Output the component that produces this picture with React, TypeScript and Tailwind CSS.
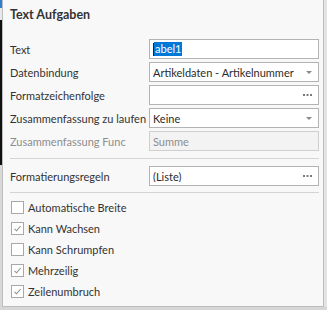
import React from "react";

const font = { fontFamily: 'Lato, "Liberation Sans", sans-serif' };

function Arrow() {
  return (
    <svg width="6" height="3" viewBox="0 0 6 3" className="shrink-0">
      <path d="M0 0H6L3 3Z" fill="#8a8a8a" />
    </svg>
  );
}

function Dots() {
  return (
    <svg width="9" height="2" viewBox="0 0 9 2" className="shrink-0">
      <rect x="0" y="0" width="2" height="2" fill="#7a7a7a" />
      <rect x="3.5" y="0" width="2" height="2" fill="#7a7a7a" />
      <rect x="7" y="0" width="2" height="2" fill="#7a7a7a" />
    </svg>
  );
}

function Row({ label, children, disabled }: { label: string; children: React.ReactNode; disabled?: boolean }) {
  return (
    <div className="flex items-center h-[20px]">
      <div className={"w-[139px] shrink-0 whitespace-nowrap text-[11px] leading-none " + (disabled ? "text-[#8d8d8d]" : "text-[#333333]")}>{label}</div>
      {children}
    </div>
  );
}

function Box({ children, disabled, right }: { children?: React.ReactNode; disabled?: boolean; right?: React.ReactNode }) {
  return (
    <div
      className={
        "w-[170px] h-[20px] flex items-center pl-[3px] pr-[6px] border text-[11px] leading-none " +
        (disabled ? "bg-[#f3f3f3] border-[#cfcfcf] text-[#8d8d8d]" : "bg-white border-[#b3b3b3] text-[#2b2b2b]")
      }
    >
      <div className="flex-1 flex items-center overflow-hidden whitespace-nowrap">{children}</div>
      {right}
    </div>
  );
}

function Check({ label, checked }: { label: string; checked?: boolean }) {
  return (
    <div className="flex items-center h-[13px]">
      <div className="w-[13px] h-[13px] border border-[#a8a8a8] bg-white flex items-center justify-center shrink-0">
        {checked && (
          <svg width="9" height="9" viewBox="0 0 9 9">
            <path d="M1.5 4.8L3.6 6.8L7.6 2" stroke="#8f8f8f" strokeWidth="1.1" fill="none" />
          </svg>
        )}
      </div>
      <span className="ml-[4px] text-[11px] leading-none text-[#333333] whitespace-nowrap">{label}</span>
    </div>
  );
}

export default function App() {
  return (
    <div className="w-[327px] h-[310px] bg-[#dcdcdc] overflow-hidden flex flex-col" style={font}>
      <div className="flex h-[307px]">
        <div className="w-[2px] h-full flex flex-col bg-[#c9c9c9]">
          <div className="h-[8px] bg-[#2f7fd0]" />
          <div className="h-[12px] bg-[#e8e8e8]" />
          <div className="h-[145px] bg-[#111111]" />
          <div className="flex-1 bg-[#d8d8d8]" />
        </div>
        <div className="w-[322px] h-full bg-[#f8f8f8] border-l border-r border-b border-[#bdbdbd] pl-[7px] pr-[3px] flex flex-col">
          <div className="pt-[8px] h-[39px] text-[12.5px] font-bold text-[#333333] leading-[14px]">Text Aufgaben</div>
          <div className="flex flex-col gap-[3px]">
            <Row label="Text">
              <Box>
                <div className="w-[1px] h-[13px] bg-[#222222]" />
                <span className="bg-[#0078d7] text-white px-[1px] leading-[14px]">abel1</span>
              </Box>
            </Row>
            <Row label="Datenbindung">
              <Box right={<Arrow />}>Artikeldaten - Artikelnummer</Box>
            </Row>
            <Row label="Formatzeichenfolge">
              <Box right={<Dots />} />
            </Row>
            <Row label="Zusammenfassung zu laufen">
              <Box right={<Arrow />}>Keine</Box>
            </Row>
            <Row label="Zusammenfassung Func" disabled>
              <Box disabled>Summe</Box>
            </Row>
          </div>
          <div className="h-[1px] bg-[#d4d4d4] mt-[7px] mr-[1px]" />
          <div className="mt-[7px]">
            <Row label="Formatierungsregeln">
              <Box right={<Dots />}>(Liste)</Box>
            </Row>
          </div>
          <div className="h-[1px] bg-[#d4d4d4] mt-[6px] mr-[1px]" />
          <div className="flex flex-col gap-[8px] mt-[8px] pl-[1px]">
            <Check label="Automatische Breite" />
            <Check label="Kann Wachsen" checked />
            <Check label="Kann Schrumpfen" />
            <Check label="Mehrzeilig" checked />
            <Check label="Zeilenumbruch" checked />
          </div>
        </div>
        <div className="flex-1 bg-[#e4e4e4]" />
      </div>
      <div className="flex-1 bg-[#d6d6d6]" />
    </div>
  );
}
